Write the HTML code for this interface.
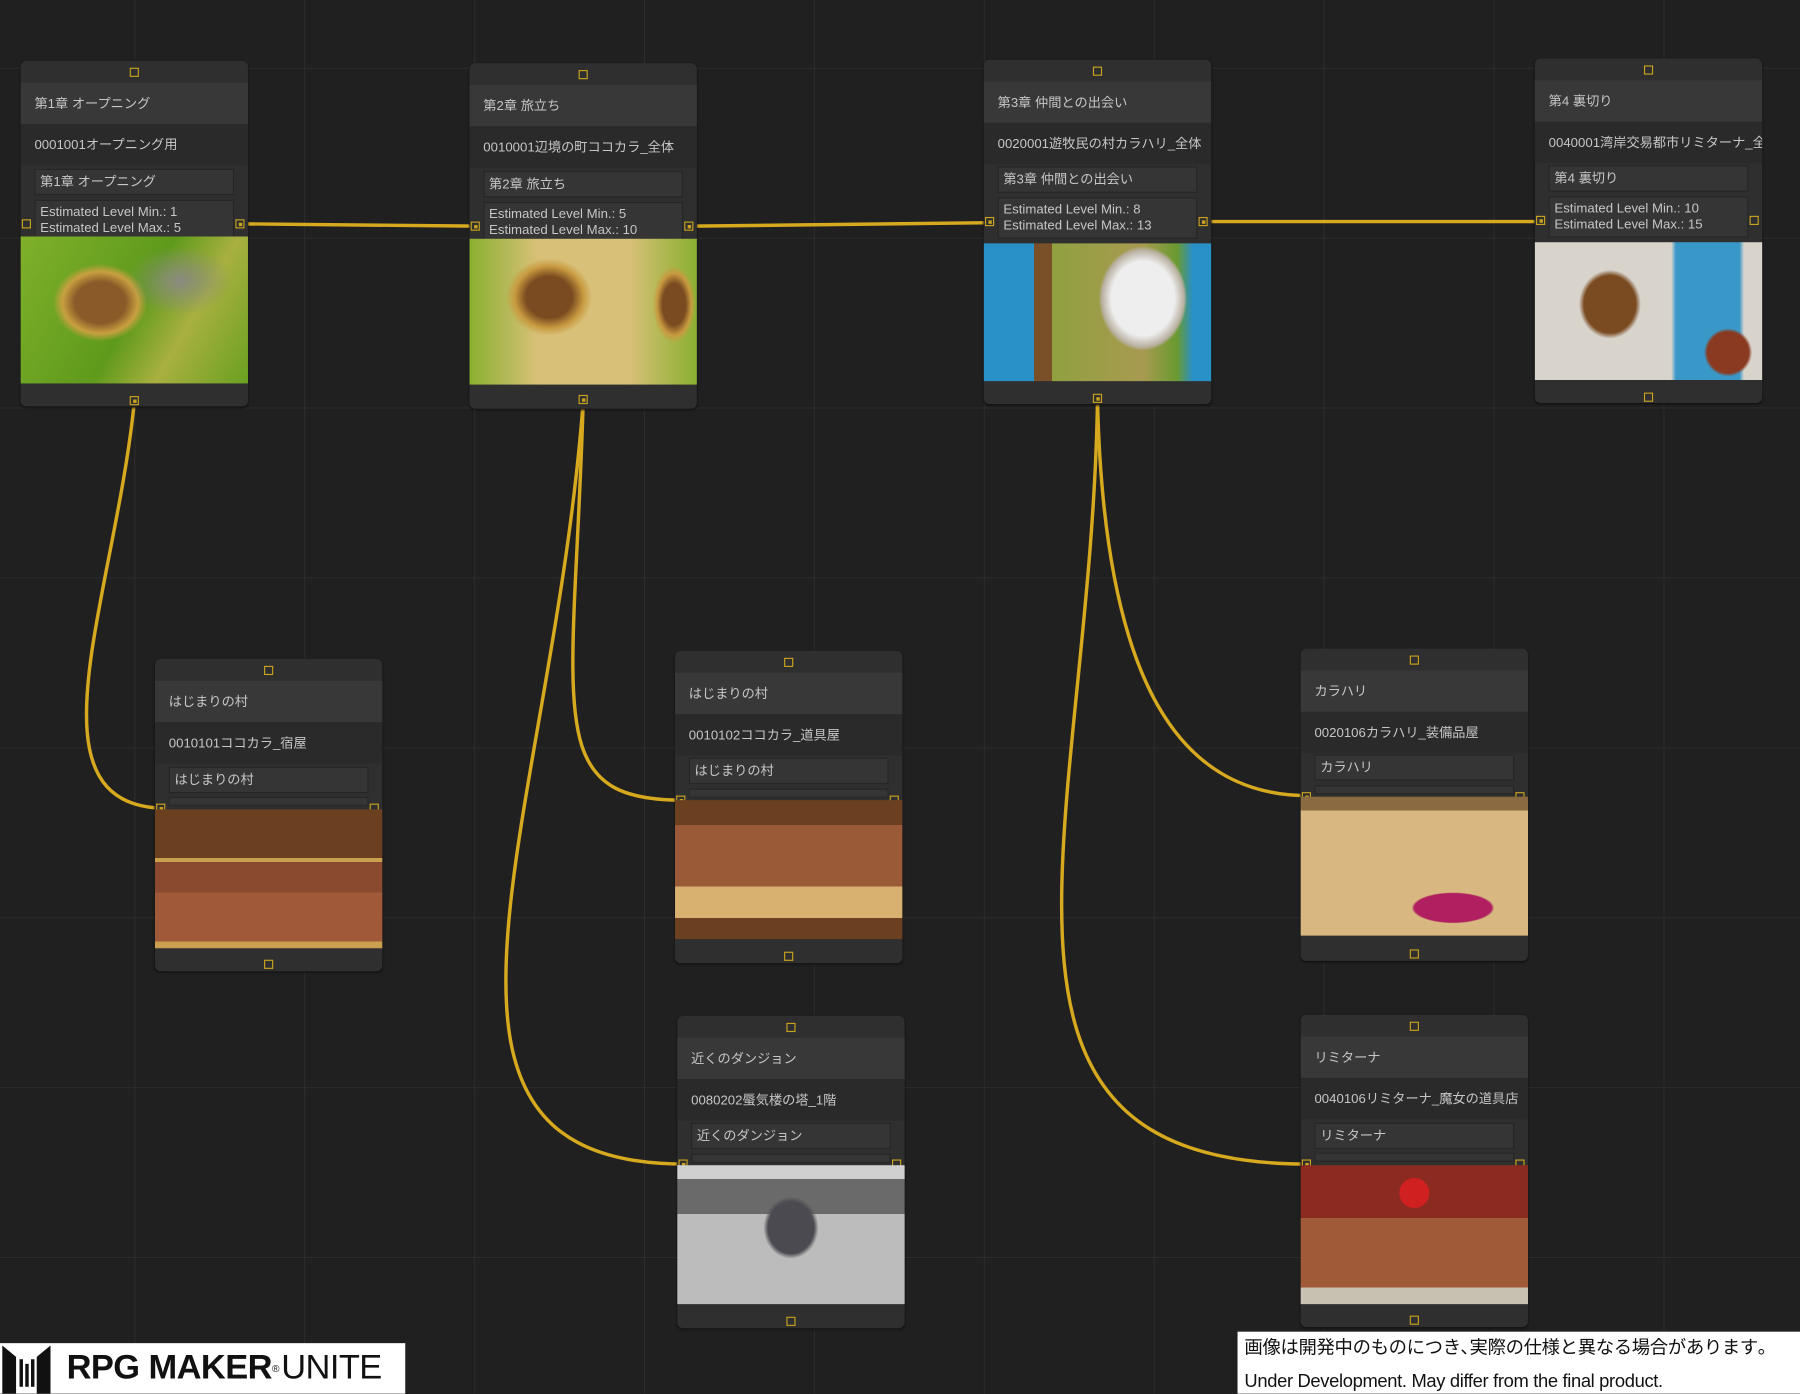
<!DOCTYPE html>
<html><head><meta charset="utf-8"><style>
html,body{margin:0;padding:0;width:1800px;height:1394px;overflow:hidden;background:#202020;}
#w{position:absolute;left:0;top:0;width:1568px;height:1214px;transform:scale(1.148);transform-origin:0 0;
background-color:#202020;
background-image:linear-gradient(to right,#2c2c2c 1px,transparent 1px),linear-gradient(to bottom,#2c2c2c 1px,transparent 1px);
background-size:148px 148px;background-position:117px 59px;
font-family:"Liberation Sans","Noto Sans CJK JP",sans-serif;color:#c6c6c6;font-size:11.5px;}
.n{position:absolute;width:198px;background:#2f2f2f;border-radius:5px;box-shadow:0 1px 2px #111;}
.r{position:absolute;left:0;right:0;padding-left:12px;height:36px;line-height:38px;white-space:nowrap;overflow:hidden;}
.t{background:#383838;}
.s{background:#2a2a2a;}
.f{position:absolute;left:12px;right:12px;background:#353535;border:1px solid #262626;padding-left:4px;height:21px;line-height:22px;white-space:nowrap;overflow:hidden;}
.e{position:absolute;left:12px;right:12px;background:#353535;border:1px solid #262626;padding:3px 4px 1px;line-height:14px;height:30px;}
.b{position:absolute;left:12px;right:12px;background:#353535;border:1px solid #262626;height:6px;}
.img{position:absolute;left:0;right:0;}
.p{position:absolute;width:6px;height:6px;border:1.5px solid #c9a21f;box-sizing:content-box;}
.p.on::after{content:"";position:absolute;left:1.5px;top:1.5px;width:3px;height:3px;background:#c9a21f;}
</style></head><body><div id="w">
<svg width="1568" height="1214" style="position:absolute;left:0;top:0" fill="none" stroke="#d6a91f" stroke-width="3">
<path d="M212 195 L416 197"/><path d="M604 197 L863 194"/><path d="M1051 193 L1343 193"/>
<path d="M117 350 C100 520,20 700,141 704"/>
<path d="M508 350 C500 620,470 697,594 697"/>
<path d="M508 350 C480 720,330 1014,596 1014"/>
<path d="M956 349 C962 600,1030 693,1139 693"/>
<path d="M956 349 C950 720,820 1014,1139 1014"/>
</svg>

<div class="n" style="left:18px;top:53px;height:301px">
<div class="p" style="left:95px;top:6px"></div>
<div class="r t" style="top:19px">第1章 オープニング</div>
<div class="r s" style="top:55px">0001001オープニング用</div>
<div class="f" style="top:94px">第1章 オープニング</div>
<div class="e" style="top:121px">Estimated Level Min.: 1<br>Estimated Level Max.: 5</div>
<div class="p" style="left:1px;top:138px"></div><div class="p on" style="left:187px;top:138px"></div>
<div class="img" style="top:153px;height:128px;background:radial-gradient(ellipse 45px 30px at 70% 30%,#8a8a80,transparent),radial-gradient(ellipse 55px 45px at 35% 45%,#8a5a28 40%,#c8a040 60%,transparent 75%),linear-gradient(120deg,#7fb02a,#5f9a1c 50%,#a8b040 70%,#6aa020)"></div>
<div class="p on" style="left:95px;top:292px"></div>
</div>
<div class="n" style="left:409px;top:55px;height:301px">
<div class="p" style="left:95px;top:6px"></div>
<div class="r t" style="top:19px">第2章 旅立ち</div>
<div class="r s" style="top:55px">0010001辺境の町ココカラ_全体</div>
<div class="f" style="top:94px">第2章 旅立ち</div>
<div class="e" style="top:121px">Estimated Level Min.: 5<br>Estimated Level Max.: 10</div>
<div class="p on" style="left:1px;top:138px"></div><div class="p on" style="left:187px;top:138px"></div>
<div class="img" style="top:153px;height:127px;background:radial-gradient(ellipse 50px 45px at 35% 40%,#7a4a20 40%,#c89a40 60%,transparent 75%),radial-gradient(ellipse 25px 45px at 90% 45%,#7a4a20 40%,#c89a40 60%,transparent 75%),linear-gradient(90deg,#8ab030,#d8c078 30%,#d8c078 70%,#8ab030)"></div>
<div class="p on" style="left:95px;top:289px"></div>
</div>
<div class="n" style="left:857px;top:52px;height:300px">
<div class="p" style="left:95px;top:6px"></div>
<div class="r t" style="top:19px">第3章 仲間との出会い</div>
<div class="r s" style="top:55px">0020001遊牧民の村カラハリ_全体</div>
<div class="f" style="top:93px">第3章 仲間との出会い</div>
<div class="e" style="top:120px">Estimated Level Min.: 8<br>Estimated Level Max.: 13</div>
<div class="p on" style="left:1px;top:137px"></div><div class="p on" style="left:187px;top:137px"></div>
<div class="img" style="top:160px;height:120px;background:radial-gradient(ellipse 55px 65px at 70% 40%,#eee 50%,#b8b0a0 65%,transparent 70%),linear-gradient(90deg,#2a90c8 0 22%,#7a5028 22% 30%,#90a040 30%,#a89a50 70%,#6a9a30 85%,#2a90c8 92%)"></div>
<div class="p on" style="left:95px;top:291px"></div>
</div>
<div class="n" style="left:1337px;top:51px;height:300px">
<div class="p" style="left:95px;top:6px"></div>
<div class="r t" style="top:19px">第4 裏切り</div>
<div class="r s" style="top:55px">0040001湾岸交易都市リミターナ_全体</div>
<div class="f" style="top:93px">第4 裏切り</div>
<div class="e" style="top:120px">Estimated Level Min.: 10<br>Estimated Level Max.: 15</div>
<div class="p on" style="left:1px;top:137px"></div><div class="p" style="left:187px;top:137px"></div>
<div class="img" style="top:160px;height:120px;background:radial-gradient(ellipse 45px 50px at 33% 45%,#7a4a20 50%,transparent 60%),radial-gradient(ellipse 30px 30px at 85% 80%,#8a3a20 60%,transparent 70%),linear-gradient(90deg,#d8d4cc 0 60%,#3a98c8 62% 90%,#d8d4cc 92%)"></div>
<div class="p" style="left:95px;top:291px"></div>
</div>
<div class="n" style="left:135px;top:574px;height:272px">
<div class="p" style="left:95px;top:6px"></div>
<div class="r t" style="top:19px">はじまりの村</div>
<div class="r s" style="top:55px">0010101ココカラ_宿屋</div>
<div class="f" style="top:94px">はじまりの村</div>
<div class="b" style="top:120px"></div>
<div class="p on" style="left:1px;top:126px"></div><div class="p" style="left:187px;top:126px"></div>
<div class="img" style="top:131px;height:121px;background:linear-gradient(180deg,#6a4020 0 35%,#c8a050 35% 38%,#8a4a30 38% 60%,#a05a3a 60% 95%,#c8a050 95%)"></div>
<div class="p" style="left:95px;top:262px"></div>
</div>
<div class="n" style="left:588px;top:567px;height:272px">
<div class="p" style="left:95px;top:6px"></div>
<div class="r t" style="top:19px">はじまりの村</div>
<div class="r s" style="top:55px">0010102ココカラ_道具屋</div>
<div class="f" style="top:93px">はじまりの村</div>
<div class="b" style="top:120px"></div>
<div class="p on" style="left:1px;top:126px"></div><div class="p" style="left:187px;top:126px"></div>
<div class="img" style="top:130px;height:121px;background:linear-gradient(180deg,#6a4020 0 18%,#9a5a38 18% 62%,#d8b070 62% 85%,#6a4020 85%)"></div>
<div class="p" style="left:95px;top:262px"></div>
</div>
<div class="n" style="left:590px;top:885px;height:272px">
<div class="p" style="left:95px;top:6px"></div>
<div class="r t" style="top:19px">近くのダンジョン</div>
<div class="r s" style="top:55px">0080202蜃気楼の塔_1階</div>
<div class="f" style="top:93px">近くのダンジョン</div>
<div class="b" style="top:120px"></div>
<div class="p on" style="left:1px;top:125px"></div><div class="p" style="left:187px;top:125px"></div>
<div class="img" style="top:130px;height:121px;background:radial-gradient(ellipse 40px 45px at 50% 45%,#4a4a50 50%,transparent 60%),linear-gradient(180deg,#d0d0d0 0 10%,#6a6a6a 10% 35%,#bcbcbc 35%)"></div>
<div class="p" style="left:95px;top:262px"></div>
</div>
<div class="n" style="left:1133px;top:565px;height:272px">
<div class="p" style="left:95px;top:6px"></div>
<div class="r t" style="top:19px">カラハリ</div>
<div class="r s" style="top:55px">0020106カラハリ_装備品屋</div>
<div class="f" style="top:92px">カラハリ</div>
<div class="b" style="top:119px"></div>
<div class="p on" style="left:1px;top:125px"></div><div class="p" style="left:187px;top:125px"></div>
<div class="img" style="top:129px;height:121px;background:radial-gradient(ellipse 48px 18px at 67% 80%,#b02060 70%,transparent 75%),linear-gradient(180deg,#8a6a40 0 10%,#d8b880 10%)"></div>
<div class="p" style="left:95px;top:262px"></div>
</div>
<div class="n" style="left:1133px;top:884px;height:272px">
<div class="p" style="left:95px;top:6px"></div>
<div class="r t" style="top:19px">リミターナ</div>
<div class="r s" style="top:55px">0040106リミターナ_魔女の道具店</div>
<div class="f" style="top:94px">リミターナ</div>
<div class="b" style="top:120px"></div>
<div class="p on" style="left:1px;top:126px"></div><div class="p" style="left:187px;top:126px"></div>
<div class="img" style="top:131px;height:121px;background:radial-gradient(ellipse 18px 18px at 50% 20%,#d02020 70%,transparent 75%),linear-gradient(180deg,#8a2a20 0 38%,#a05a38 38% 88%,#c8c0b0 88%)"></div>
<div class="p" style="left:95px;top:262px"></div>
</div>

<div style="position:absolute;left:0;top:1170px;width:353px;height:44px;background:#fff;color:#111">
<svg width="46" height="44" style="position:absolute;left:0;top:0"><path d="M2 2 L14 12 L14 44 L2 44Z M44 2 L32 12 L32 44 L44 44Z" fill="#111"/><rect x="17" y="14" width="3" height="24" fill="#111"/><rect x="22" y="18" width="3" height="20" fill="#111"/><rect x="27" y="14" width="3" height="24" fill="#111"/></svg>
<div style="position:absolute;left:58px;top:4px;font-size:30px;font-weight:bold;letter-spacing:-0.5px;line-height:36px">RPG MAKER<sup style="font-size:9px;font-weight:normal;vertical-align:top;">®</sup><span style="font-weight:normal;margin-left:2px">UNITE</span></div>
</div>
<div style="position:absolute;left:1078px;top:1160px;width:490px;height:54px;background:#fff;color:#111;font-size:16px;line-height:29px;padding-left:6px;box-sizing:border-box;white-space:nowrap;overflow:hidden;letter-spacing:-0.3px">画像は開発中のものにつき､実際の仕様と異なる場合があります｡<br>Under Development. May differ from the final product.</div>
</div></body></html>
